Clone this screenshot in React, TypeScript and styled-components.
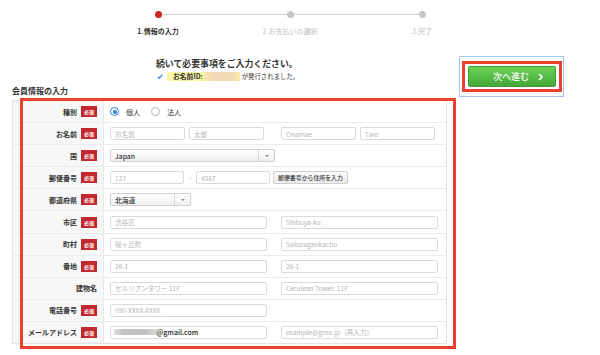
import React from "react";
import styled, { createGlobalStyle } from "styled-components";

const GlobalStyle = createGlobalStyle`
  html, body { margin: 0; padding: 0; background: #fff; }
  body {
    font-family: "Noto Sans CJK JP", "Noto Sans", sans-serif;
    color: #333;
    width: 600px;
    height: 355px;
    overflow: hidden;
  }
  * { box-sizing: border-box; }
`;

const Page = styled.div`
  width: 600px;
  height: 355px;
`;

/* ---------- stepper ---------- */
const Stepper = styled.ol`
  list-style: none;
  margin: 0;
  padding: 10.5px 0 0 92px;
  height: 56px;
  display: grid;
  grid-template-columns: repeat(3, 132px);
  align-content: start;
`;
const Step = styled.li`
  display: flex;
  flex-direction: column;
  align-items: center;
`;
const DotRow = styled.div`
  display: flex;
  align-items: center;
  width: 100%;
  height: 7px;
`;
const Track = styled.span<{ $hidden?: boolean }>`
  flex: 1;
  height: 1px;
  background: ${(p) => (p.$hidden ? "transparent" : "#d3d3d3")};
`;
const Dot = styled.span<{ $active?: boolean }>`
  width: 7px;
  height: 7px;
  border-radius: 50%;
  background: ${(p) => (p.$active ? "#c9261d" : "#c6c6c6")};
`;
const StepLabel = styled.span<{ $active?: boolean }>`
  margin-top: 8px;
  font-size: 7px;
  line-height: 10px;
  white-space: nowrap;
  font-weight: ${(p) => (p.$active ? 700 : 400)};
  color: ${(p) => (p.$active ? "#333" : "#bdbdbd")};
`;

/* ---------- main ---------- */
const Main = styled.div`
  display: flex;
  align-items: flex-start;
  margin-left: 12px;
`;
const FormColumn = styled.div`
  width: 435px;
`;
const Intro = styled.div`
  padding: 1px 0 0 144px;
`;
const Heading = styled.h2`
  margin: 0;
  font-size: 8.9px;
  line-height: 13px;
  font-weight: 700;
  color: #333;
  white-space: nowrap;
`;
const Notice = styled.p`
  margin: 1px 0 0 1px;
  height: 10px;
  display: flex;
  align-items: center;
  font-size: 6.4px;
  color: #333;
  white-space: nowrap;
`;
const CheckIcon = styled.svg`
  width: 6px;
  height: 5px;
  margin-right: 4px;
`;
const Highlight = styled.span`
  display: flex;
  align-items: center;
  height: 9px;
  padding-left: 6px;
  background: #fbf5a6;
  font-weight: 700;
  font-size: 6.8px;
`;
const Masked = styled.span`
  display: inline-block;
  width: 36px;
  height: 9px;
  margin-left: 1px;
  background: linear-gradient(90deg, #f7eab0, #f2dbb4 30%, #f2dbb4 75%, #f8eda8);
`;
const NoticeRest = styled.span`
  margin-left: 2px;
`;
const SectionTitle = styled.h3`
  margin: 5px 0 0 0;
  font-size: 8px;
  line-height: 10px;
  font-weight: 700;
  color: #333;
  white-space: nowrap;
`;

/* ---------- table ---------- */
const TableWrap = styled.div`
  position: relative;
  margin-top: 4px;
`;
const Table = styled.div`
  border: 1px solid #e3e3e3;
  width: 435px;
`;
const Row = styled.div`
  display: grid;
  grid-template-columns: 91px 1fr;
  height: 22.1px;
  border-bottom: 1px solid #ebebeb;
  &:last-child {
    border-bottom: none;
    height: 21.1px;
  }
`;
const LabelCell = styled.div`
  display: flex;
  align-items: center;
  justify-content: flex-end;
  gap: 4px;
  padding-right: 6px;
  background: #f7f7f7;
  border-right: 1px solid #e8e8e8;
  font-size: 7px;
  font-weight: 700;
  color: #333;
  white-space: nowrap;
`;
const Badge = styled.span`
  display: flex;
  align-items: center;
  justify-content: center;
  width: 16px;
  height: 11px;
  background: #c2282d;
  color: #fff;
  font-size: 5px;
  font-weight: 700;
`;
const InputCell = styled.div`
  display: flex;
  align-items: center;
  gap: 14px;
  padding-left: 6px;
`;
const Pair = styled.div`
  display: flex;
  gap: 4px;
  width: 157px;
`;
const Field = styled.div<{ $w: number }>`
  width: ${(p) => p.$w}px;
  height: 13px;
  flex: none;
  display: flex;
  align-items: center;
  padding-left: 4px;
  border: 1px solid #dadada;
  border-radius: 2px;
  background: #fff;
  font-size: 6.6px;
  color: #b5b5b5;
  white-space: nowrap;
  overflow: hidden;
`;
const Select = styled.div<{ $w: number }>`
  width: ${(p) => p.$w}px;
  height: 13px;
  flex: none;
  display: flex;
  align-items: stretch;
  border: 1px solid #d0d0d0;
  border-radius: 2px;
  background: linear-gradient(#ffffff, #efefef);
`;
const SelectValue = styled.span`
  flex: 1;
  display: flex;
  align-items: center;
  padding-left: 4px;
  font-size: 6.8px;
  font-weight: 500;
  color: #333;
`;
const SelectArrow = styled.span`
  width: 16px;
  display: flex;
  align-items: center;
  justify-content: center;
  border-left: 1px solid #d6d6d6;
  &::after {
    content: "";
    border-left: 2px solid transparent;
    border-right: 2px solid transparent;
    border-top: 2.5px solid #8a8a8a;
  }
`;
const PostalGroup = styled.div`
  display: flex;
  align-items: center;
`;
const Dash = styled.span`
  margin: 0 5px;
  font-size: 6px;
  color: #888;
`;
const SmallButton = styled.span`
  margin-left: 3px;
  height: 13px;
  display: flex;
  align-items: center;
  padding: 0 4px;
  border: 1px solid #cfcfcf;
  border-radius: 2px;
  background: linear-gradient(#fafafa, #ececec);
  font-size: 5.9px;
  font-weight: 500;
  color: #333;
  white-space: nowrap;
`;
const RadioGroup = styled.div`
  display: flex;
  align-items: center;
`;
const Radio = styled.span<{ $checked?: boolean }>`
  width: 9px;
  height: 9px;
  border-radius: 50%;
  display: flex;
  align-items: center;
  justify-content: center;
  border: ${(p) => (p.$checked ? "1.3px solid #2f7be6" : "1px solid #b5b5b5")};
  background: #fff;
  &::after {
    content: "";
    width: 4px;
    height: 4px;
    border-radius: 50%;
    background: ${(p) => (p.$checked ? "#2f7be6" : "transparent")};
  }
`;
const RadioText = styled.span`
  margin: 0 11px 0 7px;
  font-size: 7px;
  color: #333;
`;
const MaskedMail = styled.span`
  width: 43px;
  height: 6px;
  margin-left: -1.5px;
  background: linear-gradient(90deg, #e2e2e2, #c4c4c4 20%, #c0c0c0 70%, #d9d9d9);
`;
const MailText = styled.span`
  font-size: 7px;
  font-weight: 500;
  color: #222;
`;
const Annotation = styled.div`
  position: absolute;
  left: 8px;
  top: -2px;
  width: 436px;
  height: 251px;
  border: 3px solid #e8412c;
  pointer-events: none;
`;

/* ---------- action button ---------- */
const ActionFrame = styled.div`
  margin-left: 12px;
  padding: 4px 1px 4px 2px;
  border: 1px solid #a9c1ea;
`;
const ActionHighlight = styled.div`
  padding: 2px 3px 2px 3px;
  border: 3.5px solid #e8412c;
`;
const NextButton = styled.button`
  width: 88px;
  height: 21px;
  display: flex;
  align-items: center;
  gap: 9px;
  padding: 0 0 0 24px;
  border: 1px solid #3f9a33;
  border-radius: 2px;
  background: linear-gradient(#6ad456, #45a638);
  color: #fff;
  font-family: inherit;
  font-size: 9px;
  font-weight: 500;
  cursor: pointer;
`;

type Req = { label: string; required?: boolean; children: React.ReactNode };
const FormRow = ({ label, required = true, children }: Req) => (
  <Row>
    <LabelCell>
      <span>{label}</span>
      {required && <Badge>必須</Badge>}
    </LabelCell>
    <InputCell>{children}</InputCell>
  </Row>
);

const steps = ["1.情報の入力", "2.お支払いの選択", "3.完了"];

export default function App() {
  return (
    <Page>
      <GlobalStyle />
      <Stepper>
        {steps.map((s, i) => (
          <Step key={s}>
            <DotRow>
              <Track $hidden={i === 0} />
              <Dot $active={i === 0} />
              <Track $hidden={i === steps.length - 1} />
            </DotRow>
            <StepLabel $active={i === 0}>{s}</StepLabel>
          </Step>
        ))}
      </Stepper>
      <Main>
        <FormColumn>
          <Intro>
            <Heading>続いて必要事項をご入力ください。</Heading>
            <Notice>
              <CheckIcon viewBox="0 0 6 5">
                <polyline points="0.6,2.6 2.2,4.2 5.4,0.6" fill="none" stroke="#3a7fd9" strokeWidth="1.3" />
              </CheckIcon>
              <Highlight>
                お名前ID:
                <Masked />
              </Highlight>
              <NoticeRest>が発行されました。</NoticeRest>
            </Notice>
          </Intro>
          <SectionTitle>会員情報の入力</SectionTitle>
          <TableWrap>
            <Table>
              <FormRow label="種別">
                <RadioGroup>
                  <Radio $checked />
                  <RadioText>個人</RadioText>
                  <Radio />
                  <RadioText>法人</RadioText>
                </RadioGroup>
              </FormRow>
              <FormRow label="お名前">
                <Pair>
                  <Field $w={75}>お名前</Field>
                  <Field $w={75}>太郎</Field>
                </Pair>
                <Pair>
                  <Field $w={75}>Onamae</Field>
                  <Field $w={75}>Taro</Field>
                </Pair>
              </FormRow>
              <FormRow label="国">
                <Select $w={165}>
                  <SelectValue>Japan</SelectValue>
                  <SelectArrow />
                </Select>
              </FormRow>
              <FormRow label="郵便番号">
                <PostalGroup>
                  <Field $w={74}>123</Field>
                  <Dash>-</Dash>
                  <Field $w={74}>4567</Field>
                  <SmallButton>郵便番号から住所を入力</SmallButton>
                </PostalGroup>
              </FormRow>
              <FormRow label="都道府県">
                <Select $w={81}>
                  <SelectValue>北海道</SelectValue>
                  <SelectArrow />
                </Select>
              </FormRow>
              <FormRow label="市区">
                <Field $w={157}>渋谷区</Field>
                <Field $w={157}>Shibuya-ku</Field>
              </FormRow>
              <FormRow label="町村">
                <Field $w={157}>桜ヶ丘町</Field>
                <Field $w={157}>Sakuragaokacho</Field>
              </FormRow>
              <FormRow label="番地">
                <Field $w={157}>26-1</Field>
                <Field $w={157}>26-1</Field>
              </FormRow>
              <FormRow label="建物名" required={false}>
                <Field $w={157}>セルリアンタワー 11F</Field>
                <Field $w={157}>Cerulean Tower. 11F</Field>
              </FormRow>
              <FormRow label="電話番号">
                <Field $w={157}>090-XXXX-XXXX</Field>
              </FormRow>
              <FormRow label="メールアドレス">
                <Field $w={157}>
                  <MaskedMail />
                  <MailText>@gmail.com</MailText>
                </Field>
                <Field $w={157}>example@gmo.jp（再入力）</Field>
              </FormRow>
            </Table>
            <Annotation />
          </TableWrap>
        </FormColumn>
        <ActionFrame>
          <ActionHighlight>
            <NextButton>
              次へ進む
              <svg width="5" height="8" viewBox="0 0 5 8">
                <polyline points="1,1 4,4 1,7" fill="none" stroke="#fff" strokeWidth="1.6" />
              </svg>
            </NextButton>
          </ActionHighlight>
        </ActionFrame>
      </Main>
    </Page>
  );
}
